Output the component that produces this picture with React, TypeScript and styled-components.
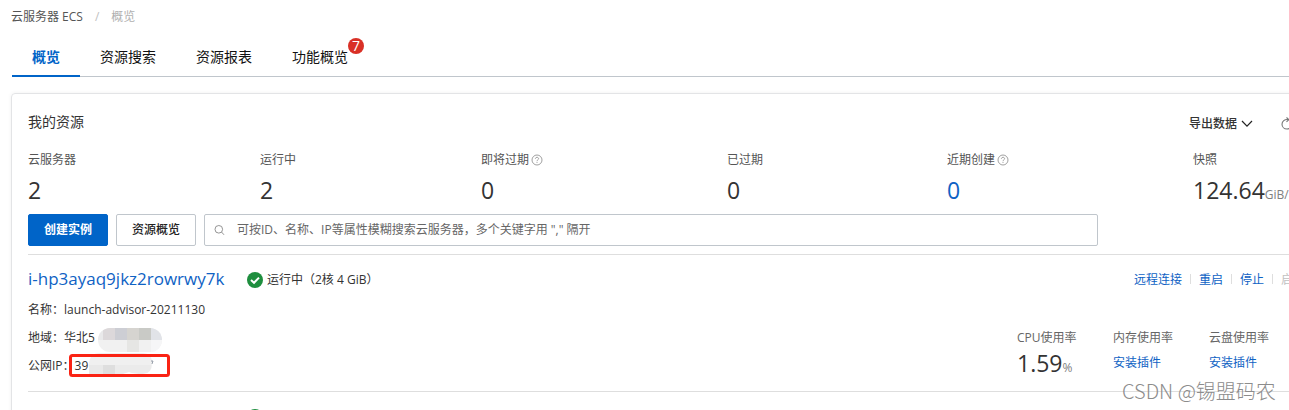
import React from 'react';
import styled, { createGlobalStyle } from 'styled-components';

const GlobalStyle = createGlobalStyle`
  * { box-sizing: border-box; }
  body {
    margin: 0;
    overflow: hidden;
    background: #fff;
    color: #333;
    font: 12px/20px "Open Sans", "Noto Sans CJK SC", sans-serif;
  }
  button, input { font: inherit; color: inherit; }
  a { color: #0f62c4; text-decoration: none; }
`;

const Page = styled.div`
  position: relative;
  overflow: hidden;
`;

const Wide = styled.div`
  margin: 0 -33px 0 11px;
`;

const Breadcrumb = styled.nav`
  display: flex;
  gap: 12px;
  padding: 7px 0 9px;
  color: #c1c1c1;
  a { color: #555; }
  span:last-child { color: #b0b0b0; }
`;

const Tabs = styled.nav`
  display: flex;
  height: 41px;
  margin-left: 1px;
  border-bottom: 1px solid #c0c6cc;
`;

const Tab = styled.a<{ $active?: boolean }>`
  display: flex;
  align-items: center;
  height: 41px;
  padding: 3px 20px 0;
  border-bottom: 2px solid ${(p) => (p.$active ? '#0064c8' : 'transparent')};
  color: ${(p) => (p.$active ? '#0064c8' : '#111')};
  font-size: 14px;
  font-weight: ${(p) => (p.$active ? 700 : 400)};
`;

const TabLabel = styled.span`
  position: relative;
`;

const Badge = styled.span`
  position: absolute;
  left: 100%;
  top: -9px;
  width: 16px;
  height: 16px;
  border-radius: 8px;
  background: #d93026;
  color: #fff;
  font-size: 14px;
  line-height: 16px;
  text-align: center;
`;

const Card = styled.main`
  margin-top: 16px;
  padding: 16px;
  border: 1px solid #e3e4e6;
  border-radius: 4px;
  box-shadow: 0 0 4px rgba(0, 0, 0, 0.06);
`;

const CardHead = styled.header`
  display: flex;
  align-items: center;
  justify-content: space-between;
  height: 24px;
`;

const CardTitle = styled.h1`
  margin: 0;
  font-size: 14px;
  font-weight: 400;
`;

const HeadActions = styled.div`
  display: flex;
  align-items: center;
  gap: 28px;
  padding-top: 4px;
`;

const PlainButton = styled.button`
  display: flex;
  align-items: center;
  gap: 4px;
  padding: 0;
  border: 0;
  background: none;
  font-weight: 500;
  min-width: 24px;
`;

const Stats = styled.dl`
  display: grid;
  grid-template-columns: 232fr 221fr 246fr 220fr 246fr 112px;
  margin: 16px 0 8px;
`;

const StatLabel = styled.dt`
  display: flex;
  align-items: center;
  gap: 2px;
  color: #555;
`;

const StatValue = styled.dd<{ $link?: boolean }>`
  height: 32px;
  margin: 4px 0 0;
  color: ${(p) => (p.$link ? '#0f62c4' : '#333')};
  font-size: 23px;
  line-height: 32px;
  white-space: nowrap;
  a { color: inherit; }
`;

const Unit = styled.small`
  color: #808080;
  font-size: 12px;
  line-height: 12px;
`;

const Toolbar = styled.div`
  display: flex;
  gap: 8px;
  padding: 0 207px 8px 0;
  border-bottom: 1px solid #dedede;
`;

const Button = styled.button<{ $primary?: boolean }>`
  flex: none;
  width: 80px;
  height: 32px;
  padding: 0;
  border: 1px solid ${(p) => (p.$primary ? '#0064c8' : '#c0c6cc')};
  border-radius: 2px;
  background: ${(p) => (p.$primary ? '#0064c8' : '#fff')};
  color: ${(p) => (p.$primary ? '#fff' : '#222')};
  font-weight: ${(p) => (p.$primary ? 700 : 500)};
`;

const SearchBox = styled.label`
  display: flex;
  flex: 1;
  align-items: center;
  gap: 12px;
  height: 32px;
  padding: 0 9px;
  border: 1px solid #c0c6cc;
  border-radius: 2px;
`;

const SearchInput = styled.input`
  flex: 1;
  padding: 0;
  border: 0;
  outline: 0;
  &::placeholder { color: #666; opacity: 1; }
`;

const Instance = styled.article`
  padding: 8px 0 11px;
  border-bottom: 1px solid #dedede;
`;

const InstanceHead = styled.div`
  display: flex;
  align-items: center;
  height: 32px;
`;

const InstanceLink = styled.a`
  flex: none;
  width: 219px;
  font-size: 17px;
`;

const Status = styled.span`
  display: flex;
  align-items: center;
  gap: 4px;
  padding-top: 2px;
`;

const Actions = styled.div`
  display: flex;
  align-items: center;
  margin-left: auto;
  padding-top: 2px;
`;

const Action = styled.a<{ $disabled?: boolean }>`
  color: ${(p) => (p.$disabled ? '#c1c1c1' : '#0f62c4')};
  &:not(:first-child)::before {
    content: '';
    display: inline-block;
    width: 1px;
    height: 10px;
    margin: 0 8px;
    background: #dedede;
  }
`;

const InstanceBody = styled.div`
  display: flex;
  justify-content: space-between;
  align-items: flex-end;
  padding-top: 1px;
`;

const Details = styled.div`
  position: relative;
`;

const Detail = styled.div`
  line-height: 28px;
`;

const Redaction = styled.svg`
  position: absolute;
  left: 40px;
  top: 31px;
`;

const Metrics = styled.div`
  display: grid;
  grid-template-columns: repeat(3, 96px);
`;

const MetricLabel = styled.div`
  color: #666;
  line-height: 24px;
`;

const MetricValue = styled.div<{ $big?: boolean }>`
  height: 30px;
  font-size: ${(p) => (p.$big ? 23 : 12)}px;
  line-height: 26px;
`;

const Watermark = styled.div`
  position: absolute;
  left: 1122px;
  top: 377px;
  color: #8c8c8c;
  font: 300 20px/28px "Noto Sans CJK SC", sans-serif;
  white-space: nowrap;
  pointer-events: none;
`;

const Help = () => (
  <svg width="12" height="12" viewBox="0 0 12 12" fill="none" stroke="#888" aria-hidden="true">
    <circle cx="6" cy="6" r="5" strokeWidth=".8" />
    <path d="M4.4 4.8C4.4 2.8 7.6 2.8 7.6 4.7C7.6 5.8 6 5.8 6 7.2M6 8.1V9" strokeWidth=".8" />
  </svg>
);

const SearchIcon = () => (
  <svg width="11" height="12" viewBox="0 0 11 12" fill="none" stroke="#888" strokeWidth=".9" aria-hidden="true">
    <circle cx="4.8" cy="5.3" r="3.8" />
    <path d="M7.6 8.1L10 10.8" />
  </svg>
);

const Check = () => (
  <svg width="16" height="16" viewBox="0 0 16 16" aria-hidden="true">
    <circle cx="8" cy="8" r="8" fill="#1e8e3e" />
    <path d="M4 8.1L7 10.8L12 5.6" fill="none" stroke="#fff" strokeWidth="2" />
  </svg>
);

const Chevron = () => (
  <svg width="12" height="8" viewBox="0 0 12 8" fill="none" stroke="#222" strokeWidth="1.2" aria-hidden="true">
    <path d="M1 1L6 6.2L11 1" />
  </svg>
);

const Refresh = () => (
  <svg width="12" height="14" viewBox="0 0 12 14" fill="none" stroke="#777" strokeWidth="1.1" aria-hidden="true">
    <path d="M7 2.5C3.6 2.1 1 4.3 1 7.2C1 10 3.2 12 6 12C8.8 12 11 10 11 7.2M5.5 .5L7.8 2.6L5.5 4.8" />
  </svg>
);

const Mosaic = () => (
  <Redaction width="104" height="54" viewBox="0 0 104 54" aria-hidden="true">
    <defs>
      <clipPath id="region"><rect x="30" y="1" width="64" height="24" rx="12" /></clipPath>
      <clipPath id="address"><path d="M32 26H75Q84 26 84 36Q84 47 75 47Q66 47 61 45L55 47H21V38Q21 26 32 26Z" /></clipPath>
    </defs>
    <g clipPath="url(#region)">
      <path fill="#f1f1f1" d="M30 1h64v24H30z" />
      <path fill="#e9e9ea" d="M30 1h5v12h-5z" />
      <path fill="#dcd8da" d="M35 1h12v12H35z" />
      <path fill="#cdced4" d="M47 1h12v12H47z" />
      <path fill="#d6d4d0" d="M59 1h12v12H59z" />
      <path fill="#c9cac6" d="M71 1h12v12H71z" />
      <path fill="#e1e3e8" d="M83 1h12v12H83z" />
      <path fill="#e6e6e4" d="M59 13h12v12H59z" />
      <path fill="#f6f6f7" d="M83 13h12v12H83z" />
    </g>
    <g clipPath="url(#address)">
      <path fill="#f0f0f0" d="M20 26h64v12H20z" />
      <path fill="#e9e9e9" d="M20 38h15v10H20z" />
      <path fill="#dedede" d="M35 38h12v10H35z" />
      <path fill="#ebebeb" d="M47 38h37v10H47z" />
    </g>
    <path d="M83 34h2l-1 3" stroke="#7e8794" strokeWidth=".8" fill="none" />
    <rect x="2.500" y="28.500" width="98" height="20" rx="2" fill="none" stroke="#fa2314" strokeWidth="3" />
  </Redaction>
);

const stats = [
  { label: '云服务器', value: '2' },
  { label: '运行中', value: '2' },
  { label: '即将过期', value: '0', help: true },
  { label: '已过期', value: '0' },
  { label: '近期创建', value: '0', help: true, link: true },
  { label: '快照', value: '124.64', unit: 'GiB/1个' },
];

const Title = ({ id }: { id: string }) => (
  <InstanceHead>
    <InstanceLink href="#instance">{id}</InstanceLink>
    <Status><Check />运行中（2核 4 GiB）</Status>
    <Actions>
      <Action href="#connect">远程连接</Action>
      <Action href="#restart">重启</Action>
      <Action href="#stop">停止</Action>
      <Action href="#start" $disabled>启动</Action>
    </Actions>
  </InstanceHead>
);

export default function App() {
  return (
    <Page>
      <GlobalStyle />
      <Wide>
        <Breadcrumb>
          <a href="#ecs">云服务器 ECS</a><span>/</span><span>概览</span>
        </Breadcrumb>
        <Tabs>
          <Tab href="#overview" $active>概览</Tab>
          <Tab href="#search">资源搜索</Tab>
          <Tab href="#report">资源报表</Tab>
          <Tab href="#features"><TabLabel>功能概览<Badge>7</Badge></TabLabel></Tab>
        </Tabs>
        <Card>
          <CardHead>
            <CardTitle>我的资源</CardTitle>
            <HeadActions>
              <PlainButton>导出数据<Chevron /></PlainButton>
              <PlainButton aria-label="刷新"><Refresh /></PlainButton>
            </HeadActions>
          </CardHead>
          <Stats>
            {stats.map((s) => (
              <div key={s.label}>
                <StatLabel>{s.label}{s.help && <Help />}</StatLabel>
                <StatValue $link={s.link}>
                  {s.link ? <a href="#recent">{s.value}</a> : s.value}
                  {s.unit && <Unit>{s.unit}</Unit>}
                </StatValue>
              </div>
            ))}
          </Stats>
          <Toolbar>
            <Button $primary>创建实例</Button>
            <Button>资源概览</Button>
            <SearchBox>
              <SearchIcon />
              <SearchInput aria-label="搜索云服务器" placeholder={'可按ID、名称、IP等属性模糊搜索云服务器，多个关键字用 "," 隔开'} />
            </SearchBox>
          </Toolbar>
          <Instance>
            <Title id="i-hp3ayaq9jkz2rowrwy7k" />
            <InstanceBody>
              <Details>
                <Detail>名称：launch-advisor-20211130</Detail>
                <Detail>地域：华北5</Detail>
                <Detail>公网IP：39</Detail>
                <Mosaic />
              </Details>
              <Metrics>
                <div>
                  <MetricLabel>CPU使用率</MetricLabel>
                  <MetricValue $big>1.59<Unit>%</Unit></MetricValue>
                </div>
                <div>
                  <MetricLabel>内存使用率</MetricLabel>
                  <MetricValue><a href="#memory">安装插件</a></MetricValue>
                </div>
                <div>
                  <MetricLabel>云盘使用率</MetricLabel>
                  <MetricValue><a href="#disk">安装插件</a></MetricValue>
                </div>
              </Metrics>
            </InstanceBody>
          </Instance>
          <Instance>
            <Title id="i-8vax9ocnz2rwgpdwb7" />
          </Instance>
        </Card>
      </Wide>
      <Watermark>CSDN @锡盟码农</Watermark>
    </Page>
  );
}
